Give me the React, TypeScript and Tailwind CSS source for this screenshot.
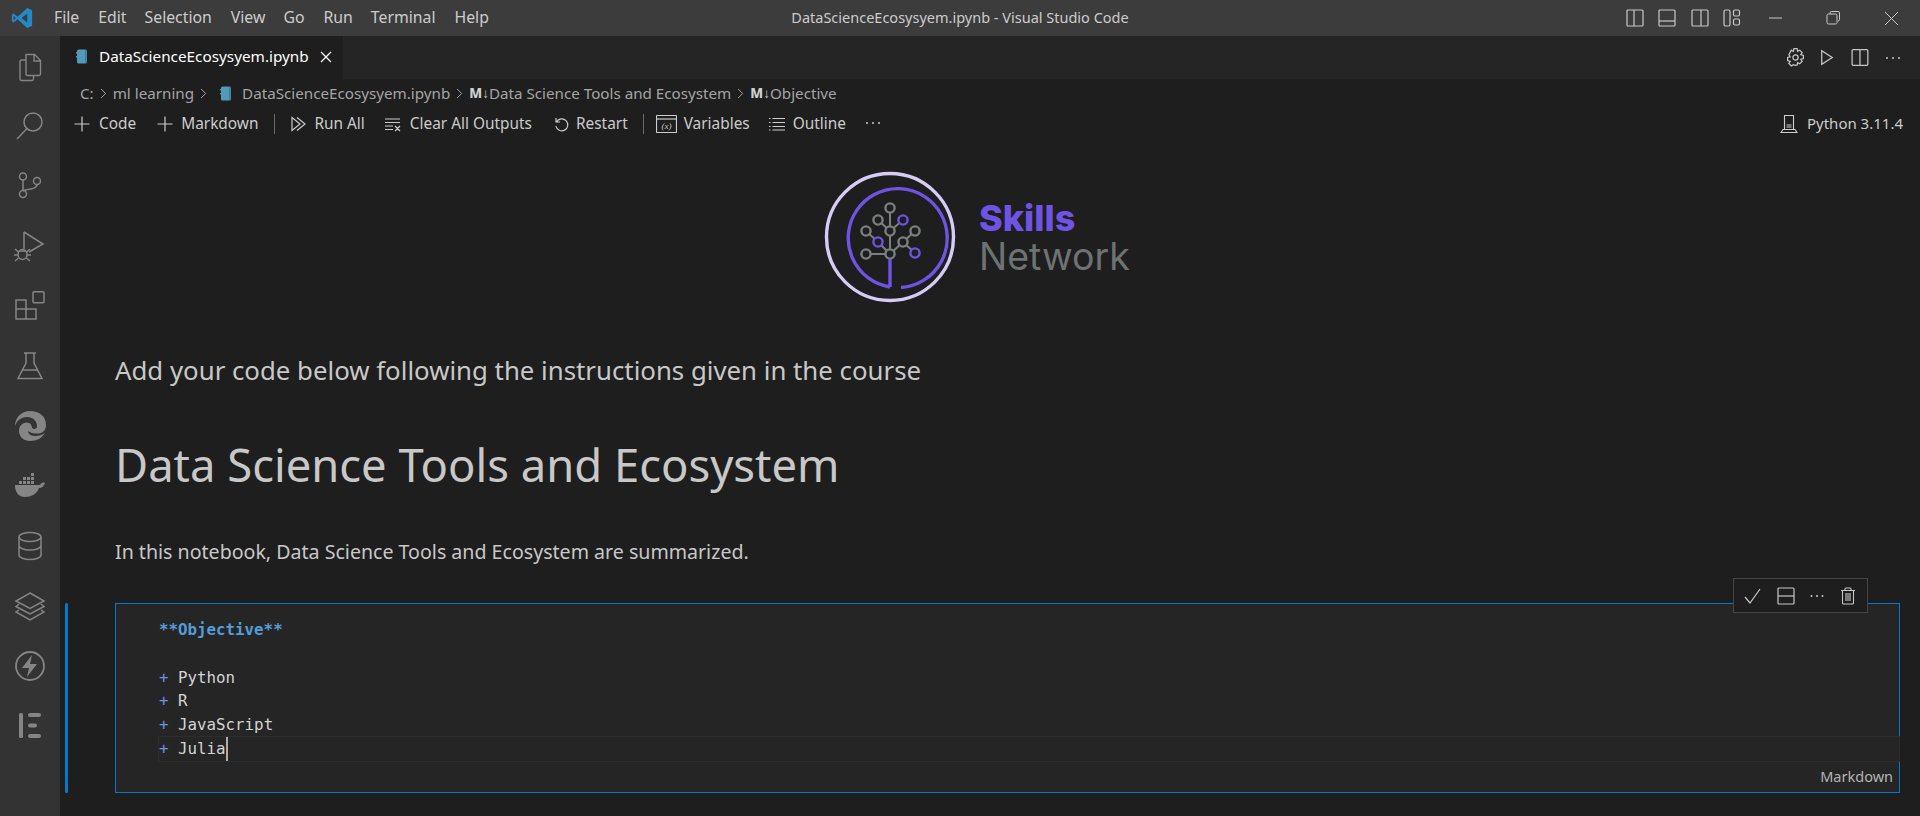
import { ChevronRight } from "lucide-react";
import type { ReactNode } from "react";

const ui = "font-['Noto_Sans','Open_Sans',sans-serif]";

function Ico({ size = 24, vb = 24, children, className = "" }: { size?: number; vb?: number; children: ReactNode; className?: string }) {
  return (
    <svg width={size} height={size} viewBox={`0 0 ${vb} ${vb}`} fill="none" stroke="currentColor" strokeWidth="1" className={`shrink-0 ${className}`}>
      {children}
    </svg>
  );
}

function NotebookIcon() {
  return (
    <svg width="12" height="15" viewBox="0 0 12 15" className="shrink-0">
      <rect x="1" y="0.5" width="10" height="14" rx="1.5" fill="#519aba" />
      <rect x="0" y="3" width="2" height="1.5" fill="#519aba" />
      <rect x="0" y="7" width="2" height="1.5" fill="#519aba" />
      <rect x="9.5" y="1" width="0.8" height="13" fill="#2c5f75" />
    </svg>
  );
}

function ActivityBar() {
  const icons: ReactNode[] = [
    <Ico size={32} vb={32} key="files"><path d="M12 3.500h8.500l6 6V23a1.500 1.500 0 0 1-1.500 1.500H13.500A1.500 1.500 0 0 1 12 23V3.500Z M20 3.500v6.500h6.500" strokeWidth="1.400" /><path d="M12 9H7.500A1.500 1.500 0 0 0 6 10.500V28a1.500 1.500 0 0 0 1.500 1.500h10.500a1.500 1.500 0 0 0 1.500-1.500v-3.500" strokeWidth="1.400" /></Ico>,
    <Ico size={32} vb={32} key="search"><circle cx="19" cy="11" r="9" strokeWidth="1.500" /><path d="M13 17.500 3 28" strokeWidth="1.500" /></Ico>,
    <Ico size={32} vb={32} key="git"><circle cx="9" cy="5.500" r="3.500" strokeWidth="1.500" /><circle cx="9" cy="23" r="3.500" strokeWidth="1.500" /><circle cx="23" cy="10" r="3.500" strokeWidth="1.500" /><path d="M9 9v10.500M23 13.500c0 4-6 4.500-14 6" strokeWidth="1.500" /></Ico>,
    <Ico size={32} vb={32} key="debug"><path d="M10 1v17M10 1l19 12-14 8" strokeWidth="1.500" /><ellipse cx="8.500" cy="23.500" rx="4.500" ry="5" strokeWidth="1.500" /><path d="M1 18l3.500 3M16 18l-3.500 3M1 30l3.500-3M16 30l-3.500-3M0 24h4M13 24h4M5 20h7" strokeWidth="1.500" /></Ico>,
    <Ico size={32} vb={32} key="ext"><path d="M2 9h10v9h10v10H2V9ZM2 18h10v10" strokeWidth="1.500" /><rect x="19" y="0.800" width="11" height="11" rx="1" strokeWidth="1.500" /></Ico>,
    <Ico size={32} vb={32} key="flask"><path d="M10 3h12M12 3v10L4 28.500h24L20 13V3M8.500 20h15" strokeWidth="1.500" /></Ico>,
    <svg width="32" height="32" viewBox="0 0 32 32" key="edge" fill="currentColor"><path d="M16 1C7 1 1 8 1 16c2-6 7-9 12-9 6 0 10 4 10 9 0 2-1 3-3 3-3 0-1-4-5-6-5-2-10 2-10 8 0 6 5 10 11 10 7 0 12-3 15-8-3 2-6 3-10 3-5 0-7-3-7-5 4 3 9 3 13 2 4-2 5-5 5-8C32 6 25 1 16 1Z" /></svg>,
    <svg width="32" height="32" viewBox="0 0 32 32" key="docker" fill="currentColor"><path d="M1 15h25c1-2 3-3 5-2-1 3-3 5-6 5-2 6-8 9-14 9-6 0-10-4-10-12Z" /><path d="M5 11h3v3H5zM9 11h3v3H9zM13 11h3v3h-3zM17 11h3v3h-3zM9 7h3v3H9zM13 7h3v3h-3zM17 7h3v3h-3zM17 3h3v3h-3z" /></svg>,
    <Ico size={32} vb={32} key="db"><ellipse cx="16" cy="7" rx="11" ry="4.500" strokeWidth="1.500" /><path d="M5 7v18c0 2.500 5 4.500 11 4.500s11-2 11-4.500V7M5 15.500c0 2.500 5 4.500 11 4.500s11-2 11-4.500" strokeWidth="1.500" /></Ico>,
    <Ico size={32} vb={32} key="layers"><path d="M16 3 30 11l-14 7.500L2 11 16 3Z" strokeWidth="1.500" /><path d="M5 14 2 16.500l14 7.500 14-7.500-3-2.500M5 20l-3 2 14 8 14-8-3-2" strokeWidth="1.500" /></Ico>,
    <svg width="32" height="32" viewBox="0 0 32 32" key="bolt"><circle cx="16" cy="16" r="14" fill="none" stroke="currentColor" strokeWidth="1.800" /><path d="M18 5 8 18h7l-2 9 10-13h-7l2-9Z" fill="currentColor" /></svg>,
    <svg width="32" height="32" viewBox="0 0 32 32" key="el" fill="currentColor"><rect x="5" y="3" width="4" height="25" rx="1.500" /><rect x="14" y="3" width="13" height="4" rx="2" /><rect x="14" y="13.500" width="9" height="4" rx="2" /><rect x="14" y="24" width="13" height="4" rx="2" /></svg>,
  ];
  return (
    <nav className="flex w-[60px] shrink-0 flex-col items-center bg-[#333333] pt-[1px] text-[#858585]">
      {icons.map((icon, i) => (
        <div key={i} className="flex h-[59.900px] w-full items-center justify-center">
          {icon}
        </div>
      ))}
    </nav>
  );
}

function TitleBar() {
  const menu = [
    ["File", "ml-[21px]"],
    ["Edit", "ml-[19px]"],
    ["Selection", "ml-[18px]"],
    ["View", "ml-[19px]"],
    ["Go", "ml-[18px]"],
    ["Run", "ml-[19px]"],
    ["Terminal", "ml-[18px]"],
    ["Help", "ml-[19px]"],
  ];
  return (
    <header className="relative flex h-[36px] shrink-0 items-center bg-[#3c3c3c] text-[15.800px] text-[#cccccc]">
      <svg width="22" height="22" viewBox="0 0 100 100" className="ml-[11px] shrink-0">
        <path d="M74 4 96 15v70L74 96 30 56 12 70 4 65V35l8-5 18 14L74 4Zm0 26L48 50l26 20V30ZM12 40v20l10-10-10-10Z" fill="#2489ca" />
      </svg>
      {menu.map(([label, cls]) => (
        <span key={label} className={cls}>{label}</span>
      ))}
      <span className="absolute left-[660px] top-[7px] w-[600px] whitespace-nowrap text-center text-[14.500px] text-[#cccccc]">
        DataScienceEcosysyem.ipynb - Visual Studio Code
      </span>
      <div className="ml-auto flex items-center text-[#c8c8c8]">
        <Ico size={20} vb={20}><rect x="2" y="2" width="16" height="16" rx="1" strokeWidth="1.200" /><path d="M9 2v16" strokeWidth="1.200" /></Ico>
        <Ico size={20} vb={20} className="ml-[12px]"><rect x="2" y="2" width="16" height="16" rx="1" strokeWidth="1.200" /><path d="M2 13h16" strokeWidth="1.200" /></Ico>
        <Ico size={20} vb={20} className="ml-[13px]"><rect x="2" y="2" width="16" height="16" rx="1" strokeWidth="1.200" /><path d="M11 2v16" strokeWidth="1.200" /></Ico>
        <Ico size={20} vb={20} className="ml-[12px]"><rect x="2" y="2" width="6" height="16" rx="1.500" strokeWidth="1.200" /><rect x="11.500" y="2" width="6" height="6" rx="1.500" strokeWidth="1.200" /><rect x="11.500" y="11" width="6" height="6" rx="1.500" strokeWidth="1.200" /></Ico>
        <Ico size={20} vb={20} className="ml-[24px]"><path d="M3 10h13" /></Ico>
        <Ico size={20} vb={20} className="ml-[37px]"><rect x="4" y="6" width="10" height="10" rx="1.500" /><path d="M7 6V5a1.500 1.500 0 0 1 1.500-1.500H15A1.500 1.500 0 0 1 16.500 5v6.500A1.500 1.500 0 0 1 15 13" /></Ico>
        <Ico size={20} vb={20} className="ml-[38px] mr-[19px]"><path d="M4 4l13 13M17 4 4 17" /></Ico>
      </div>
    </header>
  );
}

function TabRow() {
  return (
    <div className={`flex h-[43px] shrink-0 items-center bg-[#252526] ${ui}`}>
      <div className="flex h-full w-[283px] items-center bg-[#1e1e1e] pl-[16px] pr-[10px] pb-[2px]">
        <NotebookIcon />
        <span className="ml-[11px] text-[15.300px] text-white">DataScienceEcosysyem.ipynb</span>
        <svg width="14" height="14" viewBox="0 0 14 14" className="ml-[10px] shrink-0" fill="none" stroke="#ffffff" strokeWidth="1.300"><path d="M2 2l10 10M12 2 2 12" /></svg>
      </div>
      <div className="ml-auto mr-[17px] flex items-center text-[#c5c5c5]">
        <Ico size={21} vb={20}><circle cx="10" cy="10" r="2.500" strokeWidth="1.200" /><path d="M8.500 1.500h3l.5 2.500 2-1 2.300 2.300-1.200 2 2.400.7v3l-2.400.7 1.200 2-2.300 2.300-2-1.100-.5 2.400h-3L8 16.900l-2 1.100-2.300-2.300 1.200-2-2.400-.7v-3l2.400-.7-1.200-2L6 3l2 1 .5-2.500Z" strokeWidth="1.200" /></Ico>
        <Ico size={21} vb={20} className="ml-[11px]"><path d="M4.500 3.500v13l10-6.500-10-6.500Z" strokeWidth="1.200" /></Ico>
        <Ico size={21} vb={20} className="ml-[12px]"><rect x="2" y="2.500" width="15" height="15" rx="1" strokeWidth="1.200" /><path d="M9.500 2.500v15" strokeWidth="1.200" /></Ico>
        <Ico size={20} vb={20} className="ml-[12px]"><circle cx="4" cy="10" r="1" fill="currentColor" stroke="none" /><circle cx="10" cy="10" r="1" fill="currentColor" stroke="none" /><circle cx="16" cy="10" r="1" fill="currentColor" stroke="none" /></Ico>
      </div>
    </div>
  );
}

function MarkIcon() {
  return <span className="text-[13.500px] font-extrabold text-[#d0d0d0]">M↓</span>;
}

function Crumbs() {
  const chev = <ChevronRight size={17} strokeWidth={1.300} className="mx-[1px] shrink-0 text-[#b0b0b0]" />;
  return (
    <div className={`flex h-[28px] shrink-0 items-center pl-[20px] text-[15.200px] text-[#a5a5a5] ${ui}`}>
      <span>C:</span>
      {chev}
      <span>ml learning</span>
      {chev}
      <span className="ml-[7px] mr-[10px]"><NotebookIcon /></span>
      <span>DataScienceEcosysyem.ipynb</span>
      {chev}
      <MarkIcon />
      <span>Data Science Tools and Ecosystem</span>
      {chev}
      <MarkIcon />
      <span>Objective</span>
    </div>
  );
}

function Toolbar() {
  const plus = (cls: string) => (
    <Ico size={18} vb={18} className={cls}><path d="M9 1.500v15M1.500 9h15" strokeWidth="1.200" /></Ico>
  );
  return (
    <div className={`flex h-[33px] shrink-0 items-center text-[15.400px] text-[#cccccc] ${ui}`}>
      {plus("ml-[13px]")}
      <span className="ml-[8px]">Code</span>
      {plus("ml-[20px]")}
      <span className="ml-[7px]">Markdown</span>
      <span className="ml-[16px] h-[20px] w-px bg-[#6a6a6a]" />
      <Ico size={18} vb={18} className="ml-[14px]"><path d="M3 2.500v13l8-6.500-8-6.500ZM8 2.500l8 6.500-8 6.500" strokeWidth="1.200" /></Ico>
      <span className="ml-[7px]">Run All</span>
      <Ico size={18} vb={18} className="ml-[19px]"><path d="M1 4h15M1 7.500h15M1 11h8M1 14.500h8M11 11l5 5M16 11l-5 5" strokeWidth="1.200" /></Ico>
      <span className="ml-[8px]">Clear All Outputs</span>
      <Ico size={18} vb={18} className="ml-[20px]"><path d="M4 3v4h4M4.500 7a6 6 0 1 1-.6 4" strokeWidth="1.200" /></Ico>
      <span className="ml-[6px]">Restart</span>
      <span className="ml-[15px] h-[20px] w-px bg-[#6a6a6a]" />
      <svg width="21" height="20" viewBox="0 0 21 20" fill="none" stroke="currentColor" className="ml-[12px] shrink-0"><rect x="0.500" y="1.500" width="20" height="17" rx="0.500" strokeWidth="1.200" /><path d="M0.500 5h20" strokeWidth="1.200" /><text x="10.500" y="14.500" textAnchor="middle" fontSize="9" fontStyle="italic" fontFamily="'Liberation Serif',serif" fill="currentColor" stroke="none">(x)</text></svg>
      <span className="ml-[7px]">Variables</span>
      <Ico size={18} vb={18} className="ml-[18px]"><path d="M1 3.500h1.500M4.500 3.500H17M1 7.500h1.500M4.500 7.500H17M1 11.500h1.500M4.500 11.500H17M1 15h1.500M4.500 15H17" strokeWidth="1.200" /></Ico>
      <span className="ml-[7px]">Outline</span>
      <Ico size={20} vb={20} className="ml-[17px]"><circle cx="4" cy="9" r="1" fill="currentColor" stroke="none" /><circle cx="10" cy="9" r="1" fill="currentColor" stroke="none" /><circle cx="16" cy="9" r="1" fill="currentColor" stroke="none" /></Ico>
      <div className="ml-auto mr-[17px] flex items-center text-[15px]">
        <svg width="18" height="20" viewBox="0 0 18 20" fill="none" stroke="currentColor" strokeWidth="1.100" className="mr-[9px] shrink-0"><path d="M4.500 1.500h9v14h-9zM1 18.500h16l-2-3H3l-2 3ZM6.500 11h5M6.500 13h5" /></svg>
        <span>Python 3.11.4</span>
      </div>
    </div>
  );
}

function Logo() {
  const gray = "#7a7f80";
  const purple = "#6f53e3";
  const nodes: [number, number, string][] = [
    [90, 48, gray], [78, 60, gray], [103, 60, purple], [66, 71, gray], [90, 71, gray], [115, 71, gray],
    [78, 82, purple], [103, 82, gray], [66, 94, gray], [90, 94, gray], [115, 93, purple],
  ];
  return (
    <div className="ml-[763px] flex h-[133px] shrink-0 items-center">
      <svg width="134" height="134" viewBox="0 0 134 134" className="shrink-0">
        <circle cx="67" cy="67" r="63.500" fill="none" stroke="#d6ccf7" strokeWidth="3.400" />
        <g transform="translate(-23 -10)">
          <path d="M90 94 L66 94 M78 60 L90 71 M103 60 L90 71 M66 71 L78 82 L90 94 L103 82 L115 71 M103 82 L115 93 M90 94 V48" fill="none" stroke={gray} strokeWidth="2" />
          {nodes.map(([x, y, c]) => (
            <circle key={`${x}-${y}`} cx={x} cy={y} r="4.600" fill="#1e1e1e" stroke={c} strokeWidth="2.400" />
          ))}
          <path d="M90 99v28M90 127a49.500 49.500 0 1 1 11 .5" fill="none" stroke={purple} strokeWidth="3.400" />
        </g>
      </svg>
      <div className="ml-[22px] font-['Inter',sans-serif] leading-none">
        <div className="text-[36px] font-extrabold leading-[40px] text-[#6f53e3]">Skills</div>
        <div className="text-[37.500px] font-normal leading-[38px] text-[#6d7374]">Network</div>
      </div>
    </div>
  );
}

function MarkdownCell() {
  const items = ["Python", "R", "JavaScript", "Julia"];
  const mono = "font-['DejaVu_Sans_Mono',monospace] text-[15.800px] leading-[23.700px]";
  return (
    <div className="mt-[37px] flex pr-[20px]">
      <div className="ml-[5px] h-[190px] w-[3px] shrink-0 rounded-sm bg-[#007acc]" />
      <div className={`relative ml-[47px] h-[190px] min-w-0 flex-1 border border-[#007acc] bg-[#252526] pl-[43px] pt-[14px] ${mono}`}>
        <div className="font-bold text-[#569cd6]">**Objective**</div>
        <div className="h-[24px]" />
        {items.map((item, i) => (
          <div key={item} className={`relative text-[#d4d4d4] ${i === 3 ? "shadow-[0_0_0_1px_#2d2d2d]" : ""}`}>
            <span className="text-[#6796e6]">+</span> {item}
            {i === 3 && <span className="absolute left-[67px] top-0 h-[24px] w-[2px] bg-[#aeafad]" />}
          </div>
        ))}
        <span className={`absolute bottom-[3px] right-[6px] text-[14.500px] text-[#b4b4b4] ${ui}`}>Markdown</span>
        <div className="absolute right-[31px] top-[-26px] flex h-[35px] w-[135px] items-center border border-[#454545] bg-[#1e1e1e] pl-[9px] text-[#c8c8c8]">
          <Ico size={20} vb={20}><path d="M2 11l5 6L17 3" strokeWidth="1.200" /></Ico>
          <Ico size={20} vb={20} className="ml-[13px]"><rect x="2" y="2" width="16" height="16" rx="1" strokeWidth="1.200" /><path d="M2 10h16" strokeWidth="1.200" /></Ico>
          <Ico size={20} vb={20} className="ml-[11px]"><circle cx="4.500" cy="10" r="1" fill="currentColor" stroke="none" /><circle cx="10" cy="10" r="1" fill="currentColor" stroke="none" /><circle cx="15.500" cy="10" r="1" fill="currentColor" stroke="none" /></Ico>
          <Ico size={20} vb={20} className="ml-[11px]"><path d="M3 4.500h14M7 4.500V3a1 1 0 0 1 1-1h4a1 1 0 0 1 1 1v1.500M4.500 4.500V17a1 1 0 0 0 1 1h9a1 1 0 0 0 1-1V4.500M8 7v8M10 7v8M12 7v8" strokeWidth="1.100" /></Ico>
        </div>
      </div>
    </div>
  );
}

export default function App() {
  return (
    <div className={`flex h-[816px] w-[1920px] flex-col overflow-hidden bg-[#1e1e1e] ${ui}`}>
      <TitleBar />
      <div className="flex min-h-0 flex-1">
        <ActivityBar />
        <main className="flex min-w-0 flex-1 flex-col">
          <TabRow />
          <Crumbs />
          <Toolbar />
          <div className="flex flex-col pt-[30px]">
            <Logo />
            <p className="ml-[55px] mt-[50px] whitespace-nowrap text-[25.800px] leading-[34px] text-[#c8c8c8]">Add your code below following the instructions given in the course</p>
            <h1 className="ml-[55px] mt-[46px] whitespace-nowrap text-[45.400px] font-normal leading-[62px] text-[#c8c8c8]">Data Science Tools and Ecosystem</h1>
            <p className="ml-[55px] mt-[43px] whitespace-nowrap text-[19.600px] leading-[28px] text-[#c8c8c8]">In this notebook, Data Science Tools and Ecosystem are summarized.</p>
            <MarkdownCell />
          </div>
        </main>
      </div>
    </div>
  );
}
